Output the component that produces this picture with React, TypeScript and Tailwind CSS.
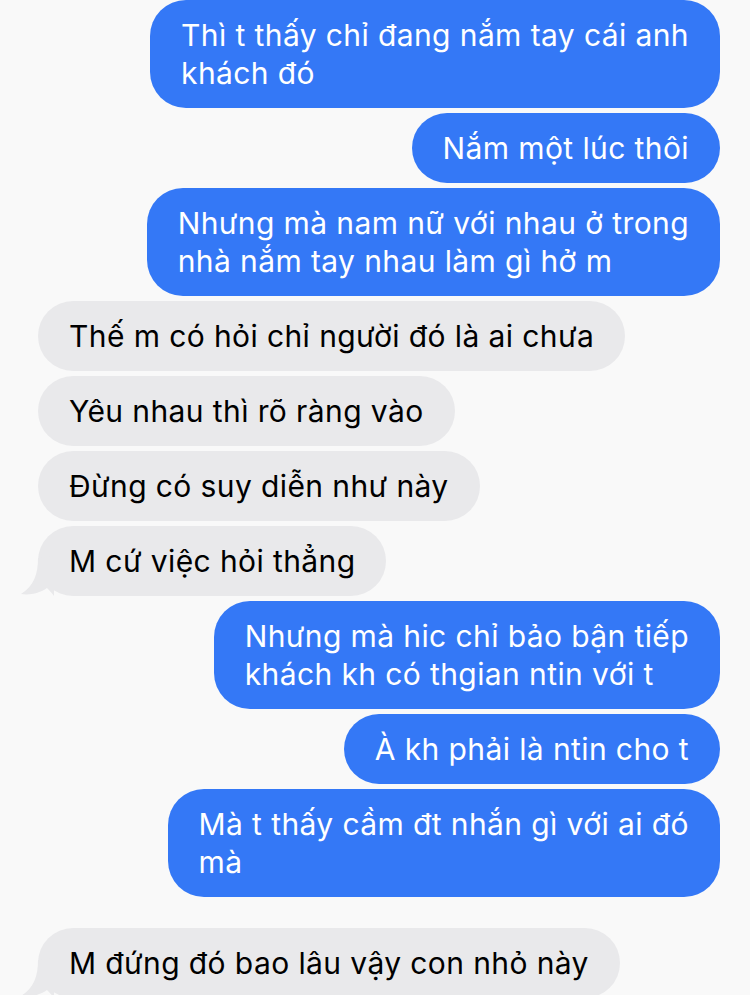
import React from "react";

type Msg = { text: string[]; me: boolean; tail?: boolean; gapTop?: boolean };

const messages: Msg[] = [
  { text: ["Thì t thấy chỉ đang nắm tay cái anh", "khách đó"], me: true },
  { text: ["Nắm một lúc thôi"], me: true },
  { text: ["Nhưng mà nam nữ với nhau ở trong", "nhà nắm tay nhau làm gì hở m"], me: true },
  { text: ["Thế m có hỏi chỉ người đó là ai chưa"], me: false },
  { text: ["Yêu nhau thì rõ ràng vào"], me: false },
  { text: ["Đừng có suy diễn như này"], me: false },
  { text: ["M cứ việc hỏi thẳng"], me: false, tail: true },
  { text: ["Nhưng mà hic chỉ bảo bận tiếp", "khách kh có thgian ntin với t"], me: true },
  { text: ["À kh phải là ntin cho t"], me: true },
  { text: ["Mà t thấy cầm đt nhắn gì với ai đó", "mà"], me: true },
  { text: ["M đứng đó bao lâu vậy con nhỏ này"], me: false, tail: true, gapTop: true },
];

const Tail = () => (
  <svg
    className="absolute left-[-18px] bottom-0"
    width="34"
    height="40"
    viewBox="0 0 34 40"
  >
    <path
      d="M18 2 C18 18 14 30 1 38 C10 39.5 20 37 27 32 C29 34 32 37 34 40 L34 0 Z"
      fill="#e9e9eb"
    />
  </svg>
);

const Bubble = ({ m }: { m: Msg }) => {
  return (
    <div
      className={`flex ${m.me ? "justify-end" : "justify-start"} ${
        m.gapTop ? "mt-[31px]" : "mt-[5px]"
      }`}
    >
      <div
        className={`relative rounded-[36px] px-[31px] py-[16px] text-[30px] tracking-[0.4px] leading-[38px] whitespace-nowrap ${
          m.me ? "bg-[#3478f6] text-white" : "bg-[#e9e9eb] text-black"
        }`}
      >
        {m.tail && <Tail />}
        <span className="relative">
          {m.text.map((line, i) => (
            <React.Fragment key={i}>
              {i > 0 && <br />}
              {line}
            </React.Fragment>
          ))}
        </span>
      </div>
    </div>
  );
};

export default function App() {
  return (
    <div
      className="min-h-[995px] w-[750px] bg-[#f9f9f9] pl-[38px] pr-[30px] overflow-hidden"
      style={{ fontFamily: "Inter, 'Noto Sans', sans-serif" }}
    >
      <div className="flex flex-col -mt-[5px]">
        {messages.map((m, i) => (
          <Bubble key={i} m={m} />
        ))}
      </div>
    </div>
  );
}
